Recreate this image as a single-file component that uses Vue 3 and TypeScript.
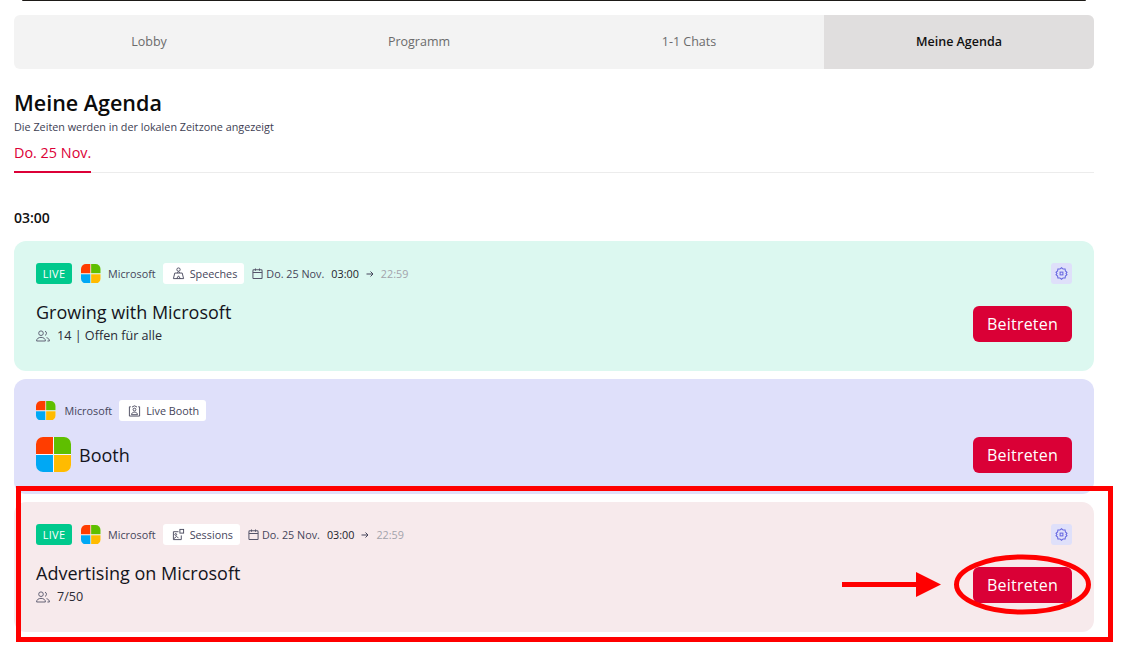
<script setup lang="ts">
interface Session {
  id: number
  tone: string
  live: boolean
  kind: string
  kindIcon: string
  title: string
  meta: string
}

const tabs = ['Lobby', 'Programm', '1-1 Chats', 'Meine Agenda']

const sessions: Session[] = [
  { id: 1, tone: 'mint', live: true, kind: 'Speeches', kindIcon: 'speech', title: 'Growing with Microsoft', meta: '14 | Offen für alle' },
  { id: 2, tone: 'lilac', live: false, kind: 'Live Booth', kindIcon: 'booth', title: 'Booth', meta: '' },
  { id: 3, tone: 'rose', live: true, kind: 'Sessions', kindIcon: 'session', title: 'Advertising on Microsoft', meta: '7/50' }
]
</script>

<template>
  <div class="page">
    <div class="strip"></div>

    <nav class="tabs">
      <div v-for="(tab, i) in tabs" :key="tab" class="tab" :class="{ active: i === 3 }">{{ tab }}</div>
    </nav>

    <h1 class="heading">Meine Agenda</h1>
    <p class="sub">Die Zeiten werden in der lokalen Zeitzone angezeigt</p>

    <div class="days">
      <span class="day">Do. 25 Nov.</span>
    </div>

    <div class="hour">03:00</div>

    <div class="list">
      <article v-for="s in sessions" :key="s.id" class="card" :class="[s.tone, { plain: !s.live }]">
        <header class="head">
          <span v-if="s.live" class="live">LIVE</span>
          <svg class="logo" viewBox="0 0 20 20">
            <rect width="20" height="20" rx="5" fill="#fff" fill-opacity="0.7" />
            <path d="M0 5a5 5 0 0 1 5-5h4.600v9.600H0z" fill="#ff3d00" />
            <path d="M10.400 0H15a5 5 0 0 1 5 5v4.600h-9.600z" fill="#5fbf00" />
            <path d="M0 10.400h9.600V20H5a5 5 0 0 1-5-5z" fill="#00a8f4" />
            <path d="M10.400 10.400H20V15a5 5 0 0 1-5 5h-4.600z" fill="#ffbb00" />
          </svg>
          <span class="brand">Microsoft</span>
          <span class="chip">
            <svg v-if="s.kindIcon === 'speech'" class="chip-icon" viewBox="0 0 14 14" fill="none" stroke="#4a4a5e" stroke-width="1">
              <circle cx="7" cy="2.800" r="1.800" />
              <path d="M3 6.500h8l1.500 6H1.500zM5.500 6.500 7 5l1.500 1.500M5 12.500l2-3 2 3" />
            </svg>
            <svg v-else-if="s.kindIcon === 'booth'" class="chip-icon" viewBox="0 0 14 14" fill="none" stroke="#4a4a5e" stroke-width="1">
              <path d="M3 3H1.500v10h11V3H11M4.300 3.300a3.800 3.800 0 0 1 5.400 0" />
              <circle cx="7" cy="6" r="1.500" />
              <path d="M3.800 11.500c0-1.700 1.400-2.700 3.200-2.700s3.200 1 3.200 2.700z" />
            </svg>
            <svg v-else class="chip-icon" viewBox="0 0 14 14" fill="none" stroke="#4a4a5e" stroke-width="1">
              <path d="M7 4H1.500v8.500H10V8" />
              <rect x="8.500" y="1.500" width="4" height="4" />
              <circle cx="4" cy="7" r="1" />
              <path d="M2 11.500 5 9l2 2" />
            </svg>
            {{ s.kind }}
          </span>
          <template v-if="s.live">
            <svg class="cal" viewBox="0 0 12 12" fill="none" stroke="#55556a" stroke-width="1.100">
              <rect x="1" y="2" width="10" height="9.500" rx="1" />
              <path d="M1 4.800h10M3.800 .5v2.500M8.200 .5v2.500" />
            </svg>
            <span class="date">Do. 25 Nov.</span>
            <span class="start">03:00</span>
            <svg class="arrow" viewBox="0 0 8 8" fill="none" stroke="#44445a" stroke-width="1">
              <path d="M.5 4h6.500M4.500 1.500 7 4 4.500 6.500" />
            </svg>
            <span class="end">22:59</span>
            <span class="gear">
              <svg viewBox="0 0 14 14" fill="none" stroke="#6565e0" stroke-width="1.100">
                <path d="M7 .8 8.700 2.200l2.200-.1.300 2.200 1.700 1.400-1 1.300 1 1.300-1.700 1.400-.3 2.200-2.200-.1L7 13.200l-1.700-1.400-2.200.1-.3-2.200-1.700-1.400 1-1.300-1-1.300 1.700-1.400.3-2.200 2.200.1z" />
                <rect x="5.500" y="5.500" width="3" height="3" />
              </svg>
            </span>
          </template>
        </header>

        <div class="body">
          <div v-if="s.live" class="info">
            <h2 class="title">{{ s.title }}</h2>
            <div class="meta">
              <svg class="people" viewBox="0 0 14 12" fill="none" stroke="#55556a" stroke-width="0.900">
                <circle cx="5" cy="3.200" r="2.300" />
                <path d="M.6 11c0-2.500 2-3.600 4.400-3.600S9.400 8.500 9.400 11zM9 1.100a2.300 2.300 0 0 1 0 4.300M10.500 7.700c1.800.4 2.900 1.500 2.900 3.300h-2" />
              </svg>
              <span>{{ s.meta }}</span>
            </div>
          </div>
          <div v-else class="booth">
            <svg class="logo-big" viewBox="0 0 20 20">
              <rect width="20" height="20" rx="4" fill="#fff" fill-opacity="0.7" />
              <path d="M0 4a4 4 0 0 1 4-4h5.700v9.700H0z" fill="#ff3d00" />
              <path d="M10.300 0H16a4 4 0 0 1 4 4v5.700h-9.700z" fill="#5fbf00" />
              <path d="M0 10.300h9.700V20H4a4 4 0 0 1-4-4z" fill="#00a8f4" />
              <path d="M10.300 10.300H20V16a4 4 0 0 1-4 4h-5.700z" fill="#ffbb00" />
            </svg>
            <h2 class="title">{{ s.title }}</h2>
          </div>
          <button class="join">Beitreten</button>
        </div>
      </article>
    </div>

    <svg class="markup" viewBox="0 0 1126 666" width="1126" height="666" aria-hidden="true">
      <rect x="18.500" y="488.500" width="1092" height="151" fill="none" stroke="#ff0000" stroke-width="5" />
      <ellipse cx="1022.500" cy="584.500" rx="66" ry="27.500" fill="none" stroke="#ff0000" stroke-width="5" />
      <rect x="842" y="582" width="76" height="5" fill="#ff0000" />
      <polygon points="916,572 941,584.500 916,597" fill="#ff0000" />
    </svg>
  </div>
</template>

<style>
html,
body {
  margin: 0;
  background: #fff;
}
</style>

<style scoped>
.page {
  position: relative;
  width: 1126px;
  height: 666px;
  box-sizing: border-box;
  padding: 0 32px 0 14px;
  overflow: hidden;
  font-family: "Open Sans", "Liberation Sans", sans-serif;
  color: #111;
}
.strip {
  height: 1px;
  margin: 0 8px 14px;
  background: #1d1a17;
  border-radius: 0 0 4px 4px;
}
.tabs {
  display: grid;
  grid-template-columns: repeat(4, 1fr);
  height: 54px;
  background: #f3f3f3;
  border-radius: 6px;
  overflow: hidden;
}
.tab {
  display: flex;
  align-items: center;
  justify-content: center;
  padding-bottom: 1px;
  font-size: 12.500px;
  color: #6b6b6b;
}
.tab.active {
  background: #e0dede;
  color: #111;
  font-weight: 600;
}
.heading {
  margin: 19px 0 0;
  font-size: 21.500px;
  line-height: 30px;
  font-weight: 600;
  color: #0b0b0b;
}
.sub {
  margin: 1px 0 0;
  font-size: 10.800px;
  line-height: 16px;
  color: #3d3d52;
}
.days {
  display: flex;
  height: 29px;
  margin-top: 8px;
  border-bottom: 1px solid #ececec;
}
.day {
  height: 28px;
  border-bottom: 2px solid #dc0037;
  font-size: 14.400px;
  line-height: 19px;
  color: #dc0037;
}
.hour {
  margin-top: 35px;
  font-size: 14px;
  line-height: 19px;
  font-weight: 600;
}
.list {
  display: flex;
  flex-direction: column;
  gap: 8px;
  margin-top: 14px;
}
.card {
  box-sizing: border-box;
  height: 130px;
  padding: 22px;
  border-radius: 12px;
}
.card.plain {
  height: 115px;
  padding-top: 21px;
}
.mint {
  background: #dcf8f0;
}
.lilac {
  background: #dfe0fa;
}
.rose {
  background: #f7eaec;
}
.head {
  display: flex;
  align-items: center;
  height: 21px;
  font-size: 10.800px;
  color: #45455a;
}
.live {
  width: 36px;
  height: 21px;
  margin-right: 9px;
  display: flex;
  align-items: center;
  justify-content: center;
  background: #00c98d;
  border-radius: 3px;
  color: #fff;
  font-size: 11px;
  letter-spacing: 0.3px;
}
.logo {
  width: 19.500px;
  height: 19.500px;
  margin-right: 7.500px;
}
.plain .logo {
  margin-right: 9px;
}
.brand {
  margin-right: 7px;
}
.chip {
  display: inline-flex;
  align-items: center;
  gap: 5px;
  height: 100%;
  padding: 0 7px 0 9px;
  background: #fff;
  border-radius: 3px;
}
.chip-icon {
  width: 13px;
  height: 13px;
}
.cal {
  width: 11px;
  height: 11px;
  margin: 0 3px 0 8px;
}
.date {
  margin-right: 7px;
}
.start {
  color: #1d1d2b;
}
.arrow {
  width: 8px;
  height: 8px;
  margin: 0 7px;
}
.end {
  color: #a3a3ab;
}
.gear {
  margin-left: auto;
  width: 21px;
  height: 21px;
  display: flex;
  align-items: center;
  justify-content: center;
  background: #dfe0fa;
  border-radius: 3px;
}
.gear svg {
  width: 13px;
  height: 13px;
}
.body {
  display: flex;
  justify-content: space-between;
  align-items: flex-start;
  margin-top: 16px;
}
.title {
  margin: 0;
  font-size: 18px;
  line-height: 24px;
  font-weight: 400;
  color: #14141c;
}
.meta {
  display: flex;
  align-items: center;
  margin-top: 4px;
  font-size: 12.600px;
  line-height: 16px;
  color: #2a2a35;
}
.people {
  width: 14px;
  height: 12px;
  margin-right: 7px;
}
.booth {
  display: flex;
  align-items: center;
  gap: 8px;
  height: 36px;
}
.logo-big {
  width: 35px;
  height: 35px;
  margin-top: -2px;
}
.join {
  width: 99px;
  height: 36px;
  margin-top: 6px;
  padding: 0;
  border: 0;
  border-radius: 6px;
  background: #da0036;
  color: #fff;
  font-family: inherit;
  font-size: 16px;
  letter-spacing: 0.2px;
}
.plain .join {
  margin-top: 0;
}
.markup {
  position: absolute;
  inset: 0;
  pointer-events: none;
}
</style>
